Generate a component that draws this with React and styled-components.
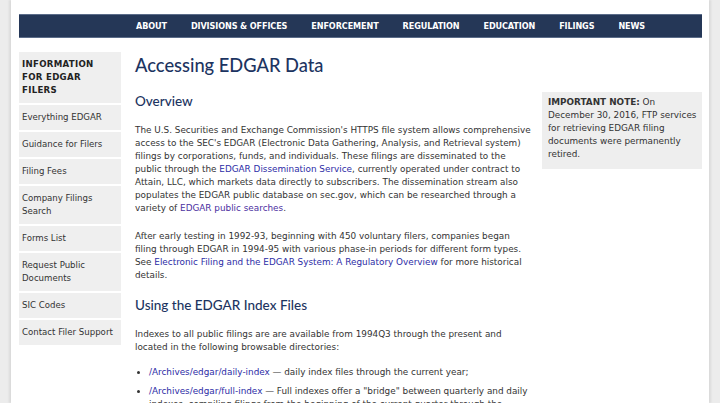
import styled, { createGlobalStyle } from 'styled-components';

const GlobalStyle = createGlobalStyle`
  html, body {
    margin: 0;
    padding: 0;
    background: #ececec;
  }
  body {
    font-family: "DejaVu Sans", Verdana, sans-serif;
    overflow: hidden;
  }
`;

const navItems = ['About', 'Divisions & Offices', 'Enforcement', 'Regulation', 'Education', 'Filings', 'News'];

const sideItems = [
  'Everything EDGAR',
  'Guidance for Filers',
  'Filing Fees',
  'Company Filings Search',
  'Forms List',
  'Request Public Documents',
  'SIC Codes',
  'Contact Filer Support',
];

const Page = styled.div`
  margin: 0 11px;
  height: 403px;
  overflow: hidden;
  background: #fff;
  box-shadow: -2px 0 2px rgba(0, 0, 0, 0.08), 2px 0 2px rgba(0, 0, 0, 0.08);
  padding: 14px 7px 0 8px;
  box-sizing: border-box;
`;

const NavBar = styled.nav`
  height: 24px;
  background: #253757;
  border-top: 1px solid #5b6c89;
  border-bottom: 1px solid #5b6c89;
  box-sizing: border-box;
  display: flex;
  align-items: center;
  padding-left: 117px;
  gap: 24px;
`;

const NavLink = styled.a`
  color: #fff;
  font-family: "DejaVu Sans Condensed", "DejaVu Sans", sans-serif;
  font-weight: bold;
  font-size: 9px;
  text-transform: uppercase;
  text-decoration: none;
  letter-spacing: -0.1px;
`;

const Layout = styled.div`
  display: flex;
  align-items: flex-start;
  margin-top: 14px;
`;

const Sidebar = styled.aside`
  flex: none;
  width: 102px;
  display: flex;
  flex-direction: column;
  gap: 2px;
`;

const SideBox = styled.div`
  background: #efefef;
  padding: 6px 3px 6px 3px;
  font-size: 8.6px;
  line-height: 13px;
  color: ${({ $heading }) => ($heading ? '#222' : '#333')};
  font-weight: ${({ $heading }) => ($heading ? 'bold' : 'normal')};
  letter-spacing: ${({ $heading }) => ($heading ? '0.3px' : '0')};
`;

const Main = styled.main`
  flex: none;
  width: 398px;
  margin-left: 14px;
  color: #333;
  font-size: 8.85px;
  line-height: 13px;
`;

const Title = styled.h1`
  margin: 0;
  font-family: Lato, "Open Sans", sans-serif;
  font-weight: 500;
  font-size: 18.3px;
  line-height: 26px;
  color: #1c3461;
`;

const Heading = styled.h2`
  margin: 13px 0 0;
  font-family: Lato, "Open Sans", sans-serif;
  font-weight: 500;
  font-size: 13.5px;
  line-height: 20px;
  color: #1c3461;
`;

const Para = styled.p`
  margin: 15px 0 0;

  ${Heading} + & {
    margin-top: 13px;
  }
`;

const Link = styled.a`
  color: ${({ $visited }) => ($visited ? '#4b2f9f' : '#2c2ca6')};
  text-decoration: none;
`;

const List = styled.ul`
  margin: 12px 0 0;
  padding-left: 14px;
`;

const Item = styled.li`
  margin-bottom: 6px;
`;

const Note = styled.div`
  flex: none;
  width: 160px;
  box-sizing: border-box;
  margin-top: 40px;
  margin-left: 9px;
  background: #eeeeee;
  padding: 4px 3px 8px 6px;
  font-size: 8.85px;
  line-height: 13px;
  color: #333;
`;

export default function App() {
  return (
    <>
      <GlobalStyle />
      <Page>
        <NavBar>
          {navItems.map((n) => (
            <NavLink key={n}>{n}</NavLink>
          ))}
        </NavBar>
        <Layout>
          <Sidebar>
            <SideBox $heading>
              INFORMATION
              <br />
              FOR EDGAR
              <br />
              FILERS
            </SideBox>
            {sideItems.map((s) => (
              <SideBox key={s}>{s}</SideBox>
            ))}
          </Sidebar>
          <Main>
            <Title>Accessing EDGAR Data</Title>
            <Heading>Overview</Heading>
            <Para>
              The U.S. Securities and Exchange Commission's HTTPS file system allows comprehensive access to the
              SEC's EDGAR (Electronic Data Gathering, Analysis, and Retrieval system) filings by corporations,
              funds, and individuals. These filings are disseminated to the public through the{' '}
              <Link>EDGAR Dissemination Service</Link>, currently operated under contract to Attain, LLC, which
              markets data directly to subscribers. The dissemination stream also populates the EDGAR public
              database on sec.gov, which can be researched through a variety of{' '}
              <Link $visited>EDGAR public searches</Link>.
            </Para>
            <Para>
              After early testing in 1992-93, beginning with 450 voluntary filers, companies began filing through
              EDGAR in 1994-95 with various phase-in periods for different form types. See{' '}
              <Link>Electronic Filing and the EDGAR System: A Regulatory Overview</Link> for more historical
              details.
            </Para>
            <Heading>Using the EDGAR Index Files</Heading>
            <Para>
              Indexes to all public filings are are available from 1994Q3 through the present and located in the
              following browsable directories:
            </Para>
            <List>
              <Item>
                <Link>/Archives/edgar/daily-index</Link> — daily index files through the current year;
              </Item>
              <Item>
                <Link>/Archives/edgar/full-index</Link> — Full indexes offer a "bridge" between quarterly and
                daily indexes, compiling filings from the beginning of the current quarter through the previous
                business day.
              </Item>
            </List>
          </Main>
          <Note>
            <b>IMPORTANT NOTE:</b> On December 30, 2016, FTP services for retrieving EDGAR filing documents were
            permanently retired.
          </Note>
        </Layout>
      </Page>
    </>
  );
}
